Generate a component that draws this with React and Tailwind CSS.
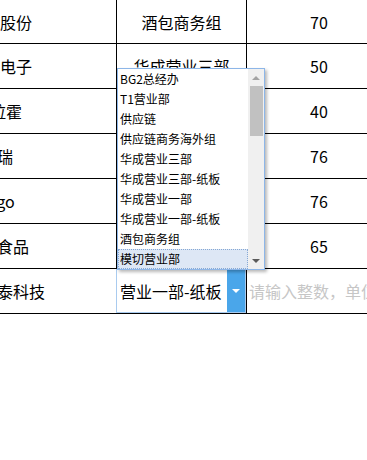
import React from "react";

const rows = [
  { name: "永新股份", shift: "-ml-[32px]", dept: "酒包商务组", qty: "70" },
  { name: "立讯电子", shift: "-ml-[32px]", dept: "华成营业三部", qty: "50" },
  { name: "欧拉霍", shift: "-ml-[26px]", dept: "", qty: "40" },
  { name: "天瑞", shift: "-ml-[19px]", dept: "", qty: "76" },
  { name: "Logo", shift: "-ml-[22px]", dept: "", qty: "76" },
  { name: "良品食品", shift: "-ml-[35px]", dept: "", qty: "65" },
];

const options = [
  "BG2总经办",
  "T1营业部",
  "供应链",
  "供应链商务海外组",
  "华成营业三部",
  "华成营业三部-纸板",
  "华成营业一部",
  "华成营业一部-纸板",
  "酒包商务组",
  "模切营业部",
];

const DropList = () => {
  return (
    <div className="absolute left-0 bottom-[calc(100%-1px)] z-10 w-[148px] h-[202px] flex bg-white border border-[#8db6e8] shadow-[2px_2px_3px_rgba(0,0,0,0.28)]">
      {/* options */}
      <div className="flex-1 flex flex-col text-[12px] text-black">
        {options.map((o, i) =>
          i === options.length - 1 ? (
            <div
              key={o}
              className="h-[20px] leading-[18px] pl-[1px] bg-[#dde7f5] border border-dotted border-[#86a8d4] whitespace-nowrap"
            >
              {o}
            </div>
          ) : (
            <div key={o} className="h-[20px] leading-[20px] pl-[2px] whitespace-nowrap">
              {o}
            </div>
          )
        )}
      </div>

      {/* scrollbar */}
      <div className="w-[16px] bg-[#f0f0f0] flex flex-col items-center">
        <div className="h-[17px] w-full flex items-center justify-center">
          <div className="w-0 h-0 border-l-[4px] border-r-[4px] border-b-[4px] border-l-transparent border-r-transparent border-b-[#a3a3a3]" />
        </div>
        <div className="w-[13px] h-[50px] bg-[#c1c1c1]" />
        <div className="flex-1" />
        <div className="h-[17px] w-full flex items-center justify-center">
          <div className="w-0 h-0 border-l-[4px] border-r-[4px] border-t-[4px] border-l-transparent border-r-transparent border-t-[#5a5a5a]" />
        </div>
      </div>
    </div>
  );
};

const App = () => {
  return (
    <div
      className="w-[367px] h-[460px] bg-white overflow-hidden text-black"
      style={{ fontFamily: '"Noto Sans CJK SC", "Noto Sans", sans-serif' }}
    >
      <div className="w-[391px] text-[16px]">
        {rows.map((r, i) => (
          <div
            key={i}
            className={`flex border-b border-black ${i === 0 ? "h-[44px]" : "h-[45px]"}`}
          >
            <div className="w-[117px] border-r border-black overflow-hidden flex items-center">
              <span className={`whitespace-nowrap ${r.shift}`}>{r.name}</span>
            </div>
            <div className="w-[130px] border-r border-black flex items-center justify-center whitespace-nowrap">
              {r.dept}
            </div>
            <div className="w-[144px] flex items-center justify-center">{r.qty}</div>
          </div>
        ))}

        {/* editing row */}
        <div className="flex h-[45px] border-b border-black">
          <div className="w-[117px] border-r border-black overflow-hidden flex items-center">
            <span className="whitespace-nowrap -ml-[19px]">信泰科技</span>
          </div>
          <div className="w-[130px] border-r border-black relative">
            <DropList />
            <div className="-ml-px w-[130px] h-[44px] flex bg-white border border-[#a9cbef]">
              <div className="flex-1 flex items-center pl-[3px] whitespace-nowrap overflow-hidden">
                营业一部-纸板
              </div>
              <div className="w-[18px] bg-[#4aa6ea] flex items-center justify-center">
                <div className="w-0 h-0 border-l-[4px] border-r-[4px] border-t-[4px] border-l-transparent border-r-transparent border-t-white" />
              </div>
            </div>
          </div>
          <div className="w-[144px] flex items-center pl-[2px] text-[#c6c6c6] whitespace-nowrap">
            请输入整数，单位
          </div>
        </div>
      </div>
    </div>
  );
};

export default App;
